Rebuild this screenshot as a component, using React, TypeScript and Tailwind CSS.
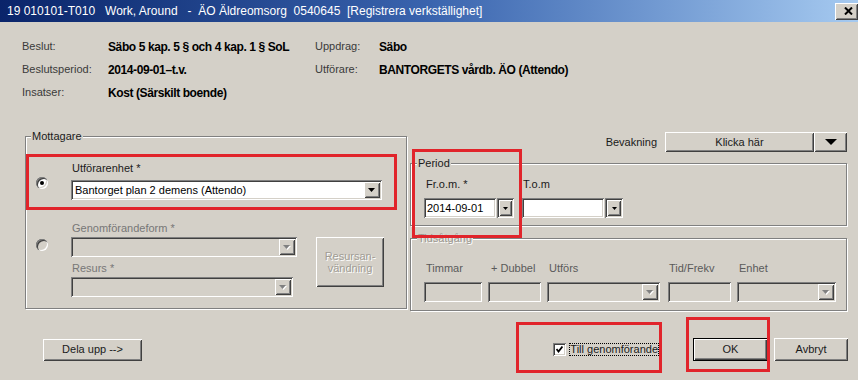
import React from "react";

const raised =
  "bg-[#d4d0c8] shadow-[inset_1px_1px_0_#fff,inset_-1px_-1px_0_#404040,inset_2px_2px_0_#d4d0c8,inset_-2px_-2px_0_#808080]";
const sunken =
  "shadow-[inset_1px_1px_0_#808080,inset_-1px_-1px_0_#fff,inset_2px_2px_0_#404040,inset_-2px_-2px_0_#d4d0c8]";
const etched =
  "border border-[#808080] shadow-[inset_1px_1px_0_#fff,1px_1px_0_#fff] m-0 p-0 min-w-0";

function Arrow({ disabled, big }: { disabled?: boolean; big?: boolean }) {
  if (big)
    return (
      <svg width="12" height="6" viewBox="0 0 12 6">
        <polygon points="0,0 12,0 6,6" fill="#000" />
      </svg>
    );
  return (
    <svg width="8" height="5" viewBox="0 0 8 5">
      {disabled && <polygon points="1,1 8,1 4.5,5" fill="#fff" />}
      <polygon points="0,0 7,0 3.5,4" fill={disabled ? "#808080" : "#000"} />
    </svg>
  );
}

function Combo({
  className,
  value,
  disabled,
}: {
  className: string;
  value?: string;
  disabled?: boolean;
}) {
  return (
    <div
      className={`h-[20px] p-[2px] flex ${sunken} ${disabled ? "bg-[#d4d0c8]" : "bg-white"} ${className}`}
    >
      <div className="flex-1 text-[11px] leading-[16px] pl-[2px] text-black whitespace-nowrap overflow-hidden">
        {value}
      </div>
      <div className={`w-[16px] h-[16px] flex items-center justify-center ${raised}`}>
        <Arrow disabled={disabled} />
      </div>
    </div>
  );
}

function Field({ className, value, disabled }: { className: string; value?: string; disabled?: boolean }) {
  return (
    <div
      className={`h-[20px] p-[2px] ${sunken} ${disabled ? "bg-[#d4d0c8]" : "bg-white"} ${className}`}
    >
      <div className="text-[11px] leading-[16px] pl-[1px] text-black">{value}</div>
    </div>
  );
}

function DateBtn({ className }: { className: string }) {
  return (
    <div
      className={`h-[20px] p-[2px] bg-[#d4d0c8] shadow-[inset_1px_1px_0_#808080,inset_-1px_-1px_0_#fff,inset_2px_2px_0_#404040] ${className}`}
    >
      <div className={`w-full h-full flex items-center justify-center ${raised}`}>
        <svg width="5" height="3" viewBox="0 0 5 3">
          <polygon points="0,0 5,0 2.5,3" fill="#000" />
        </svg>
      </div>
    </div>
  );
}

function Radio({ checked, className }: { checked?: boolean; className: string }) {
  return (
    <div
      className={`w-[12px] h-[12px] rounded-full flex items-center justify-center shadow-[inset_1px_1px_0_#808080,inset_2px_2px_0_#404040,inset_-1px_-1px_0_#fff,inset_-2px_-2px_0_#d4d0c8] ${checked ? "bg-white" : "bg-[#d4d0c8]"} ${className}`}
    >
      {checked && <div className="w-[4px] h-[4px] rounded-full bg-black" />}
    </div>
  );
}

export default function App() {
  return (
    <div className="w-[858px] h-[380px] bg-[#d4d0c8] overflow-hidden relative font-['Liberation_Sans',Arial,sans-serif] text-[11px] text-[#1a1a1a]">
      {/* Title bar */}
      <div className="h-[22px] flex items-center bg-gradient-to-r from-[#0a246a] via-[#3a64ae] to-[#a6caf0] pl-[7px] overflow-hidden">
        <span className="text-white text-[12px] whitespace-pre leading-[22px]">
          {"19 010101-T010   Work, Around   -  ÄO Äldreomsorg  0540645  [Registrera verkställighet]"}
        </span>
        <div className={`ml-auto w-[23px] h-[17px] flex items-center justify-center pl-[4px] ${raised}`}>
          <svg width="9" height="8" viewBox="0 0 9 8">
            <path d="M1 0.5 L8 7.5 M8 0.5 L1 7.5" stroke="#000" strokeWidth="2" />
          </svg>
        </div>
      </div>

      {/* Info */}
      <div className="mt-[13px] ml-[22px] grid grid-cols-[86px_207px_64px_1fr] auto-rows-[23px] items-center">
        <span className="text-[#3a3a3a]">Beslut:</span>
        <span className="font-bold text-[12px] tracking-[-0.4px] text-black whitespace-nowrap">
          Säbo 5 kap. 5 § och 4 kap. 1 § SoL
        </span>
        <span className="text-[#3a3a3a]">Uppdrag:</span>
        <span className="font-bold text-[12px] tracking-[-0.4px] text-black">Säbo</span>

        <span className="text-[#3a3a3a]">Beslutsperiod:</span>
        <span className="font-bold text-[12px] tracking-[-0.4px] text-black">2014-09-01–t.v.</span>
        <span className="text-[#3a3a3a]">Utförare:</span>
        <span className="font-bold text-[12px] tracking-[-0.4px] text-black whitespace-nowrap">
          BANTORGETS vårdb. ÄO (Attendo)
        </span>

        <span className="text-[#3a3a3a]">Insatser:</span>
        <span className="font-bold text-[12px] tracking-[-0.4px] text-black">Kost (Särskilt boende)</span>
        <span />
        <span />
      </div>

      {/* Middle */}
      <div className="mt-[26px] flex items-start">
        <fieldset className={`ml-[25px] w-[382px] pb-[11px] ${etched}`}>
          <legend className="ml-[5px] px-[1px] leading-[13px] bg-[#d4d0c8] text-[#1a1a1a]">Mottagare</legend>
          <div className="pt-[19px] pl-[10px] flex flex-col">
            <div className="flex items-start">
              <Radio checked className="mt-[15px]" />
              <div className="ml-[23px] flex flex-col">
                <span className="pl-[1px] leading-[12px]">Utförarenhet *</span>
                <Combo className="mt-[6px] w-[311px]" value="Bantorget plan 2 demens (Attendo)" />
              </div>
            </div>
            <div className="mt-[22px] flex items-start">
              <Radio className="mt-[17px]" />
              <div className="ml-[23px] flex flex-col">
                <span className="pl-[1px] leading-[12px] text-[#777]">Genomförandeform *</span>
                <Combo disabled className="mt-[3px] w-[226px]" />
                <span className="mt-[5px] pl-[1px] leading-[12px] text-[#777]">Resurs *</span>
                <Combo disabled className="mt-[3px] w-[222px]" />
              </div>
              <div
                className={`ml-[19px] mt-[15px] w-[68px] h-[50px] flex flex-col items-center justify-center leading-[12px] text-[#a09c94] [text-shadow:1px_1px_0_#fff] ${raised}`}
              >
                <span>Resursan-</span>
                <span>vändning</span>
              </div>
            </div>
          </div>
        </fieldset>

        <div className="ml-[3px] w-[437px] flex flex-col pt-[2px]">
          <div className="h-[20px] flex items-center justify-end">
            <span>Bevakning</span>
            <div className={`ml-[8px] w-[149px] h-[20px] flex items-center justify-center ${raised}`}>
              Klicka här
            </div>
            <div className={`w-[33px] h-[20px] flex items-center justify-center ${raised}`}>
              <Arrow big />
            </div>
          </div>

          <fieldset className={`mt-[5px] w-full pb-[7px] ${etched}`}>
            <legend className="ml-[6px] px-[1px] leading-[13px] bg-[#d4d0c8]">Period</legend>
            <div className="pt-[8px] pl-[13px] flex items-start">
              <div className="flex flex-col">
                <span className="pl-[2px] leading-[12px]">Fr.o.m. *</span>
                <div className="mt-[8px] flex">
                  <Field className="w-[72px]" value="2014-09-01" />
                  <DateBtn className="ml-[1px] w-[17px]" />
                </div>
              </div>
              <div className="ml-[8px] flex flex-col">
                <span className="pl-[1px] leading-[12px]">T.o.m</span>
                <div className="mt-[8px] flex">
                  <Field className="w-[82px]" />
                  <DateBtn className="ml-[1px] w-[18px]" />
                </div>
              </div>
            </div>
          </fieldset>

          <fieldset className={`mt-[6px] w-full pb-[8px] ${etched}`}>
            <legend className="ml-[6px] px-[1px] leading-[13px] bg-[#d4d0c8] text-[#9a968f] [text-shadow:1px_1px_0_#fff]">
              Tidsåtgång
            </legend>
            <div className="pt-[17px] pl-[13px] flex items-start text-[#5a5a5a]">
              <div className="flex flex-col">
                <span className="pl-[2px] leading-[12px]">Timmar</span>
                <Field disabled className="mt-[8px] w-[58px]" />
              </div>
              <div className="ml-[6px] flex flex-col">
                <span className="pl-[3px] leading-[12px]">+ Dubbel</span>
                <Field disabled className="mt-[8px] w-[53px]" />
              </div>
              <div className="ml-[6px] flex flex-col">
                <span className="pl-[2px] leading-[12px]">Utförs</span>
                <Combo disabled className="mt-[8px] w-[113px]" />
              </div>
              <div className="ml-[8px] flex flex-col">
                <span className="pl-[1px] leading-[12px]">Tid/Frekv</span>
                <Field disabled className="mt-[8px] w-[63px]" />
              </div>
              <div className="ml-[6px] flex flex-col">
                <span className="pl-[2px] leading-[12px]">Enhet</span>
                <Combo disabled className="mt-[8px] w-[99px]" />
              </div>
            </div>
          </fieldset>
        </div>
      </div>

      {/* Bottom */}
      <div className="mt-[27px] h-[23px] flex items-center pr-[10px]">
        <div className={`ml-[43px] w-[99px] h-[22px] flex items-center justify-center ${raised}`}>
          Dela upp --&gt;
        </div>
        <div className="ml-auto flex items-center">
          <div className={`w-[13px] h-[13px] bg-white flex items-center justify-center ${sunken}`}>
            <svg width="7" height="7" viewBox="0 0 7 7">
              <path d="M0.5 3 L2.5 5.5 L6.5 0.5" stroke="#000" strokeWidth="1.8" fill="none" />
            </svg>
          </div>
          <span className="ml-[3px] px-[1px] leading-[13px] outline outline-1 outline-dotted outline-black -outline-offset-1">
            Till genomförande
          </span>
        </div>
        <div
          className={`ml-[34px] w-[75px] h-[23px] flex items-center justify-center bg-[#d4d0c8] border border-black shadow-[inset_1px_1px_0_#fff,inset_-1px_-1px_0_#404040,inset_-2px_-2px_0_#808080]`}
        >
          OK
        </div>
        <div className={`ml-[6px] w-[74px] h-[23px] flex items-center justify-center ${raised}`}>
          Avbryt
        </div>
      </div>

      {/* Red annotation boxes */}
      <div className="absolute left-[26px] top-[154px] w-[371px] h-[56px] border-[3px] border-[#e1242b]" />
      <div className="absolute left-[412px] top-[149px] w-[110px] h-[89px] border-[3px] border-[#e1242b]" />
      <div className="absolute left-[516px] top-[322px] w-[146px] h-[51px] border-[3px] border-[#e1242b]" />
      <div className="absolute left-[686px] top-[317px] w-[84px] h-[55px] border-[3px] border-[#e1242b]" />
    </div>
  );
}
